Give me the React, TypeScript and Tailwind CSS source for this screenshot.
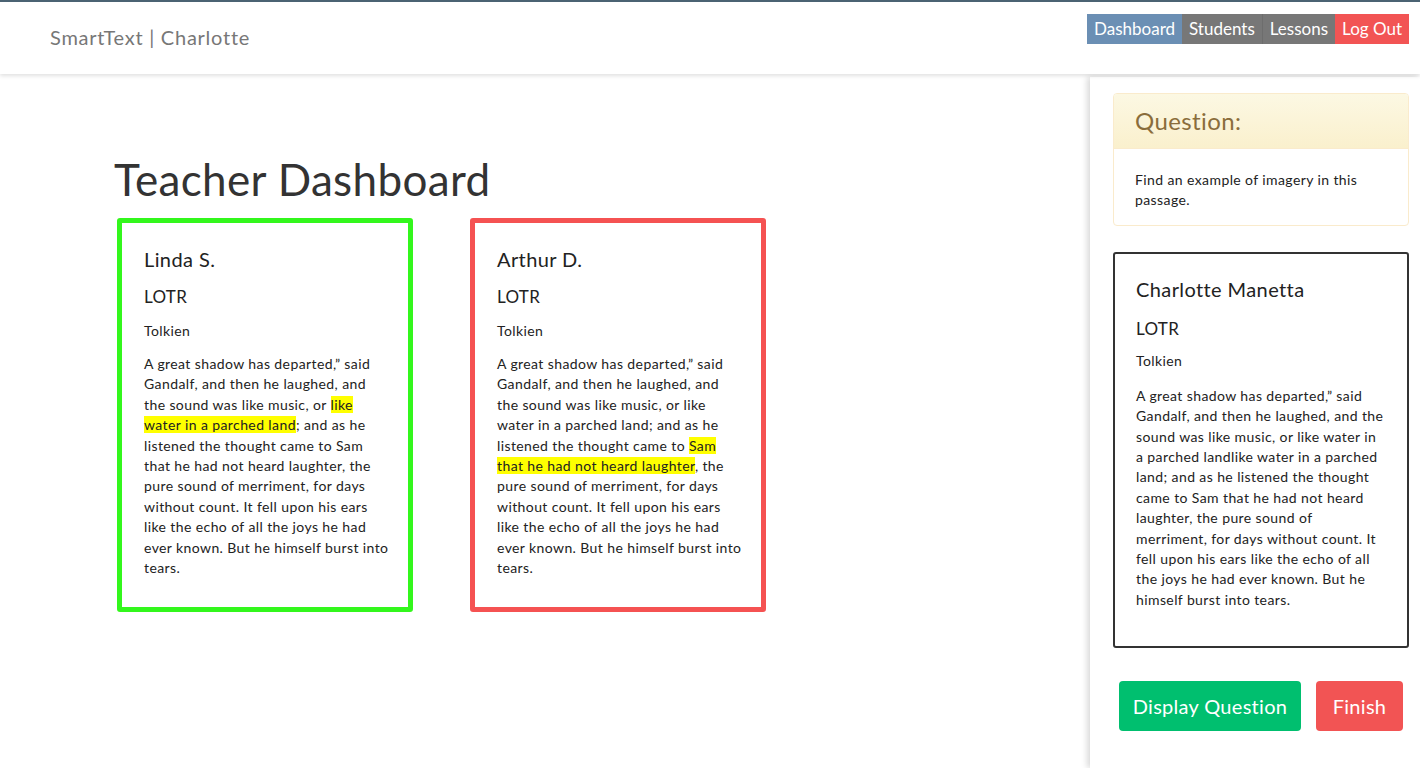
import type { ReactNode } from 'react';

const passageStart = 'A great shadow has departed,” said Gandalf, and then he laughed, and the sound was like music, or ';

function Passage({ children }: { children: ReactNode }) {
  return <p className="text-[14px] leading-[20.4px] tracking-[0.4px] text-[#222]">{children}</p>;
}

function Mark({ children }: { children: ReactNode }) {
  return <span className="bg-[#ffff00]">{children}</span>;
}

interface StudentCardProps {
  name: string;
  border: string;
  children: ReactNode;
}

function StudentCard({ name, border, children }: StudentCardProps) {
  return (
    <div className={`w-[296px] h-[394px] border-[5px] rounded-[3px] pl-[22px] pr-[18px] pt-[21px] ${border}`}>
      <h3 className="text-[20px] leading-[30px] tracking-[0.4px] text-[#222]">{name}</h3>
      <h4 className="mt-[12px] text-[17px] leading-[22px] tracking-[0.3px] text-[#222]">LOTR</h4>
      <p className="mt-[13px] text-[14px] leading-[20px] tracking-[0.4px] text-[#222]">Tolkien</p>
      <div className="mt-[13px]">{children}</div>
    </div>
  );
}

export default function App() {
  return (
    <div className="h-[768px] bg-white font-['Lato','Open_Sans',sans-serif] text-[#333] border-t-2 border-[#4b6373] overflow-hidden flex flex-col">
      {/* Navbar */}
      <header className="h-[72px] shrink-0 flex items-start justify-between pl-[50px] pr-[11px] shadow-[0_2px_4px_rgba(0,0,0,0.12)] relative z-10 bg-white">
        <div className="mt-[21px] text-[20px] leading-[28px] tracking-[0.75px] text-[#777]">SmartText | Charlotte</div>
        <nav className="mt-[12px] flex h-[30px] text-[17px] leading-[30px] text-white">
          <a className="px-[7px] bg-[#6b8fb4]">Dashboard</a>
          <a className="px-[7px] bg-[#777777] border-r border-[#6d6d6d]">Students</a>
          <a className="px-[7px] bg-[#777777]">Lessons</a>
          <a className="px-[7px] bg-[#f25454]">Log Out</a>
        </nav>
      </header>

      <div className="flex flex-1 min-h-0">
        {/* Main */}
        <main className="flex-1 pl-[114px] pt-[79px]">
          <h1 className="text-[44px] leading-[52px] tracking-[0.35px] text-[#333]">Teacher Dashboard</h1>
          <div className="mt-[13px] ml-[3px] flex gap-[57px]">
            <StudentCard name="Linda S." border="border-[#33f71c]">
              <Passage>
                {passageStart}
                <Mark>like water in a parched land</Mark>; and as he listened the thought came to Sam that he had not heard laughter, the pure sound of merriment, for days without count. It fell upon his ears like the echo of all the joys he had ever known. But he himself burst into tears.
              </Passage>
            </StudentCard>
            <StudentCard name="Arthur D." border="border-[#f55252]">
              <Passage>
                {passageStart}like water in a parched land; and as he listened the thought came to <Mark>Sam that he had not heard laughter</Mark>, the pure sound of merriment, for days without count. It fell upon his ears like the echo of all the joys he had ever known. But he himself burst into tears.
              </Passage>
            </StudentCard>
          </div>
        </main>

        {/* Sidebar */}
        <aside className="w-[330px] shrink-0 mt-[3px] pl-[23px] pr-[11px] pt-[16px] shadow-[-3px_0_6px_rgba(0,0,0,0.15)] bg-white">
          <div className="rounded-[4px] border border-[#faebcc] overflow-hidden">
            <div className="h-[55px] px-[21px] flex items-center bg-gradient-to-b from-[#fcf8e3] to-[#faf0cd] border-b border-[#faebcc]">
              <h3 className="text-[24px] tracking-[0.4px] text-[#8a6d3b]">Question:</h3>
            </div>
            <div className="px-[21px] pt-[21px] pb-[14px] text-[14px] leading-[20.4px] tracking-[0.4px] text-[#222]">
              Find an example of imagery in this passage.
            </div>
          </div>

          <div className="mt-[26px] h-[396px] border-2 border-[#333] rounded-[3px] pl-[21px] pr-[22px] pt-[20px]">
            <h3 className="text-[20px] leading-[30px] tracking-[0.4px] text-[#222]">Charlotte Manetta</h3>
            <h4 className="mt-[14px] text-[17px] leading-[22px] tracking-[0.3px] text-[#222]">LOTR</h4>
            <p className="mt-[11px] text-[14px] leading-[20px] tracking-[0.4px] text-[#222]">Tolkien</p>
            <p className="mt-[15px] text-[14px] leading-[20.4px] tracking-[0.4px] text-[#222]">
              A great shadow has departed,” said Gandalf, and then he laughed, and the sound was like music, or like water in a parched landlike water in a parched land; and as he listened the thought came to Sam that he had not heard laughter, the pure sound of merriment, for days without count. It fell upon his ears like the echo of all the joys he had ever known. But he himself burst into tears.
            </p>
          </div>

          <div className="mt-[33px] flex gap-[15px] pl-[6px]">
            <button className="h-[50px] w-[182px] whitespace-nowrap rounded-[4px] bg-[#00bf6f] text-white text-[20px] tracking-[0.3px]">Display Question</button>
            <button className="h-[50px] w-[87px] whitespace-nowrap rounded-[4px] bg-[#f25454] text-white text-[20px] tracking-[0.3px]">Finish</button>
          </div>
        </aside>
      </div>
    </div>
  );
}
